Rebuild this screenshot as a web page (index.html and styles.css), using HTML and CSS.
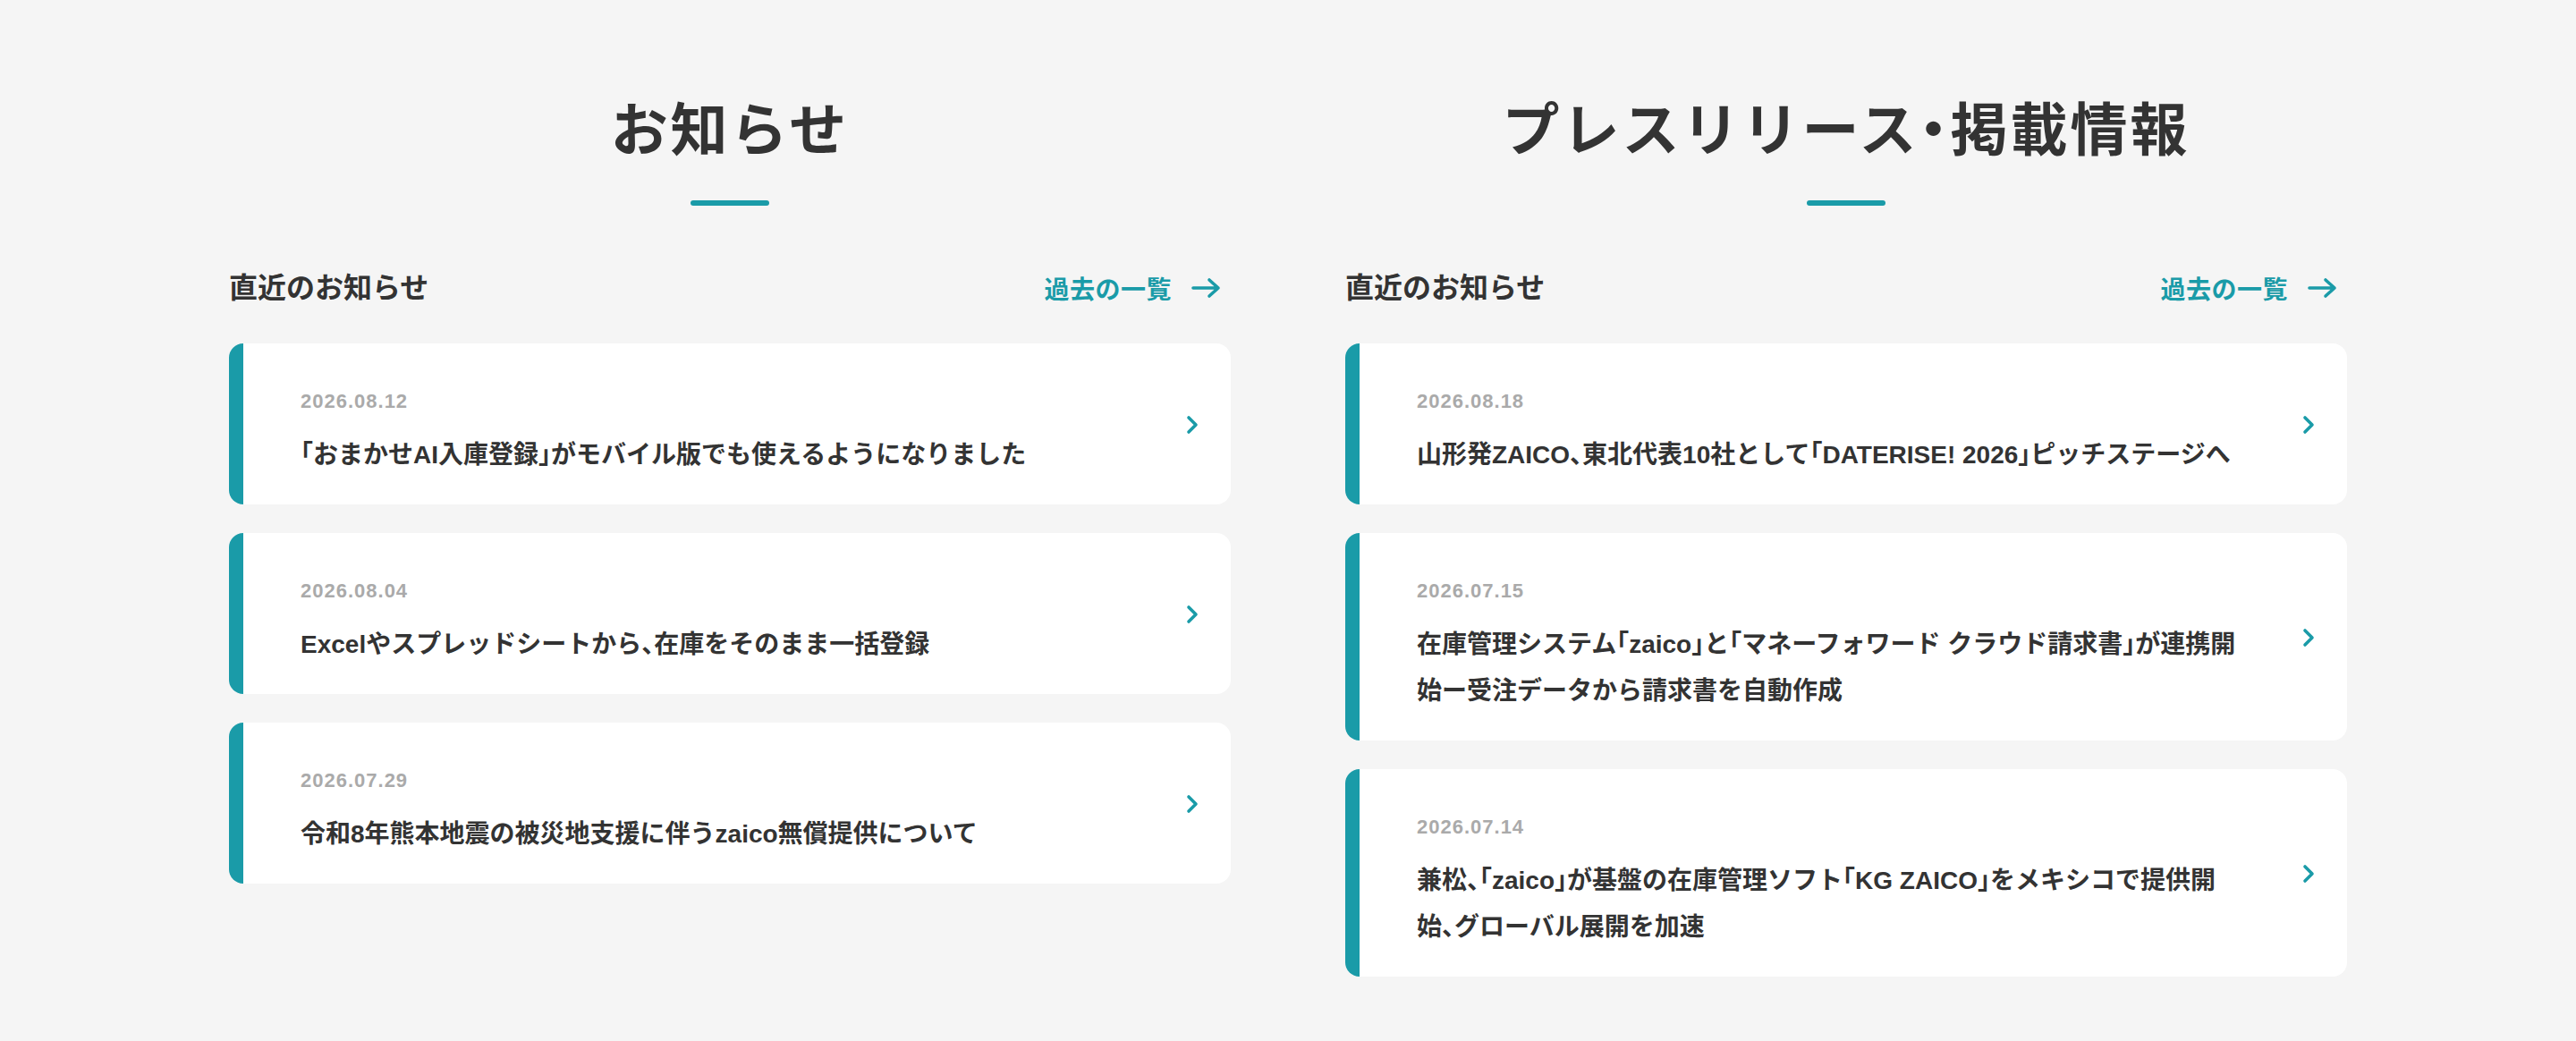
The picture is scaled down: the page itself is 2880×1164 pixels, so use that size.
FILE: index.html
```html
<!DOCTYPE html>
<html lang="ja">
<head>
    <meta charset="utf-8">
    <title>お知らせ・プレスリリース</title>
    <link rel="stylesheet" href="styles.css">
</head>
<body>
    <main class="news">
        <section class="news-col">
            <h2 class="news-title">お知らせ</h2>
            <div class="news-head">
                <h3>直近のお知らせ</h3>
                <a class="more" href="#">過去の一覧
                    <svg width="34" height="24" viewBox="0 0 34 24"><path d="M2 12H30M20 3L30 12L20 21" fill="none" stroke="currentColor" stroke-width="3.6" stroke-linecap="round" stroke-linejoin="round"/></svg>
                </a>
            </div>
            <ul class="news-list">
                <li>
                    <a class="news-card" href="#">
                        <div class="news-body">
                            <time>2026.08.12</time>
                            <p>「おまかせAI入庫登録」がモバイル版でも使えるようになりました</p>
                        </div>
                        <svg class="chev" width="14" height="22" viewBox="0 0 14 22"><path d="M3 3L11 11L3 19" fill="none" stroke="currentColor" stroke-width="3.6" stroke-linecap="round" stroke-linejoin="round"/></svg>
                    </a>
                </li>
                <li>
                    <a class="news-card" href="#">
                        <div class="news-body">
                            <time>2026.08.04</time>
                            <p>Excelやスプレッドシートから、在庫をそのまま一括登録</p>
                        </div>
                        <svg class="chev" width="14" height="22" viewBox="0 0 14 22"><path d="M3 3L11 11L3 19" fill="none" stroke="currentColor" stroke-width="3.6" stroke-linecap="round" stroke-linejoin="round"/></svg>
                    </a>
                </li>
                <li>
                    <a class="news-card" href="#">
                        <div class="news-body">
                            <time>2026.07.29</time>
                            <p>令和8年熊本地震の被災地支援に伴うzaico無償提供について</p>
                        </div>
                        <svg class="chev" width="14" height="22" viewBox="0 0 14 22"><path d="M3 3L11 11L3 19" fill="none" stroke="currentColor" stroke-width="3.6" stroke-linecap="round" stroke-linejoin="round"/></svg>
                    </a>
                </li>
            </ul>
        </section>

        <section class="news-col">
            <h2 class="news-title">プレスリリース・掲載情報</h2>
            <div class="news-head">
                <h3>直近のお知らせ</h3>
                <a class="more" href="#">過去の一覧
                    <svg width="34" height="24" viewBox="0 0 34 24"><path d="M2 12H30M20 3L30 12L20 21" fill="none" stroke="currentColor" stroke-width="3.6" stroke-linecap="round" stroke-linejoin="round"/></svg>
                </a>
            </div>
            <ul class="news-list">
                <li>
                    <a class="news-card" href="#">
                        <div class="news-body">
                            <time>2026.08.18</time>
                            <p>山形発ZAICO、東北代表10社として「DATERISE! 2026」ピッチステージへ</p>
                        </div>
                        <svg class="chev" width="14" height="22" viewBox="0 0 14 22"><path d="M3 3L11 11L3 19" fill="none" stroke="currentColor" stroke-width="3.6" stroke-linecap="round" stroke-linejoin="round"/></svg>
                    </a>
                </li>
                <li>
                    <a class="news-card" href="#">
                        <div class="news-body">
                            <time>2026.07.15</time>
                            <p>在庫管理システム「zaico」と「マネーフォワード クラウド請求書」が連携開始ー受注データから請求書を自動作成</p>
                        </div>
                        <svg class="chev" width="14" height="22" viewBox="0 0 14 22"><path d="M3 3L11 11L3 19" fill="none" stroke="currentColor" stroke-width="3.6" stroke-linecap="round" stroke-linejoin="round"/></svg>
                    </a>
                </li>
                <li>
                    <a class="news-card" href="#">
                        <div class="news-body">
                            <time>2026.07.14</time>
                            <p>兼松、「zaico」が基盤の在庫管理ソフト「KG ZAICO」をメキシコで提供開始、グローバル展開を加速</p>
                        </div>
                        <svg class="chev" width="14" height="22" viewBox="0 0 14 22"><path d="M3 3L11 11L3 19" fill="none" stroke="currentColor" stroke-width="3.6" stroke-linecap="round" stroke-linejoin="round"/></svg>
                    </a>
                </li>
            </ul>
        </section>
    </main>
</body>
</html>
```

FILE: styles.css
```css
body {
    margin: 0;
    background-color: #f5f5f5;
    color: #333;
    font-family: "Liberation Sans", "Noto Sans CJK JP", sans-serif;
}
a {
    color: inherit;
    text-decoration: none;
}
.news {
    display: grid;
    grid-template-columns: 1120px 1120px;
    column-gap: 128px;
    justify-content: center;
    align-items: start;
}
.news-title {
    margin: 98px 0 0;
    font-size: 64px;
    line-height: 96px;
    font-weight: 700;
    text-align: center;
    letter-spacing: 3px;
    font-feature-settings: "halt";
}
.news-title::after {
    content: "";
    display: block;
    width: 88px;
    height: 6px;
    margin: 30px auto 0;
    border-radius: 3px;
    background-color: #1a9ba8;
}
.news-head {
    display: flex;
    justify-content: space-between;
    align-items: center;
    margin-top: 67px;
    padding-top: 2px;
    height: 46px;
}
.news-head h3 {
    margin: 0;
    font-size: 32px;
    line-height: 46px;
    font-weight: 700;
}
.more {
    display: flex;
    align-items: center;
    gap: 22px;
    margin-right: 10px;
    color: #1a9ba8;
    font-size: 28px;
    font-weight: 700;
    letter-spacing: 0.5px;
}
.news-list {
    list-style: none;
    margin: 39px 0 0;
    padding: 0;
    display: flex;
    flex-direction: column;
    gap: 32px;
}
.news-card {
    display: flex;
    align-items: center;
    padding: 50px 36px 29px 64px;
    background-color: white;
    border-left: 16px solid #1a9ba8;
    border-radius: 16px;
}
.news-body {
    flex: 1;
    max-width: 928px;
}
.news-body time {
    display: block;
    margin-bottom: 18px;
    color: #aaa;
    font-size: 22px;
    line-height: 30px;
    font-weight: 700;
    letter-spacing: 1px;
}
.news-body p {
    margin: 0;
    padding-top: 1px;
    font-size: 28px;
    line-height: 52px;
    font-weight: 700;
    font-feature-settings: "halt";
}
.chev {
    margin-left: auto;
    margin-top: -20px;
    color: #1a9ba8;
}
```
